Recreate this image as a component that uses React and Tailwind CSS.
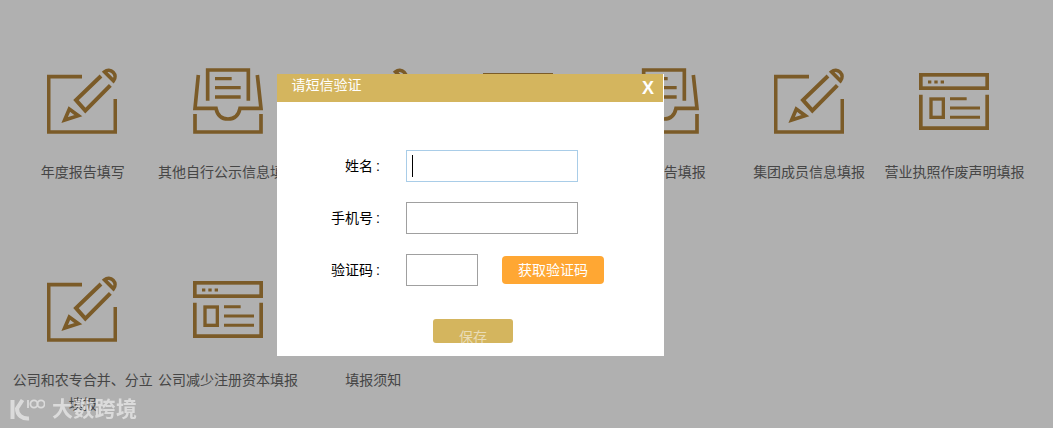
const ICON = "#b2843a";

function Pencil() {
  return (
    <svg width="70" height="66" viewBox="141 54 210 198" fill="none" stroke={ICON} strokeWidth="11">
      <path d="M246 80H146V246H346V147" />
      <path d="M303 78L228 150L256 182L331 106" strokeWidth="12" />
      <path d="M313.6 65.6A19 19 0 0 1 340.4 92.4Z" strokeWidth="11" />
      <path d="M194 210L208 177L235 197Z" strokeWidth="11" />
    </svg>
  );
}

function Inbox() {
  return (
    <svg width="70" height="66" viewBox="579 54 210 198" fill="none" stroke={ICON} strokeWidth="11">
      <path d="M623 152V60H745V152" />
      <path d="M645 86H695M645 113H722M645 141H722" strokeWidth="10" />
      <path d="M595 75L585 175H648C652 195 664 207 684 207C704 207 716 195 720 175H783L772 75" />
      <path d="M585 192V246H783V192" />
    </svg>
  );
}

function Win() {
  return (
    <svg width="70" height="57" viewBox="579 45 210 171" fill="none" stroke={ICON} strokeWidth="11">
      <rect x="584.5" y="50.5" width="199" height="40" />
      <path d="M606 72H616M625 72H635M644 72H654" strokeWidth="9" />
      <path d="M584.5 110V210.5H783.5V110" />
      <rect x="615" y="123" width="37" height="55" strokeWidth="10" />
      <path d="M672 122H722M672 150H762M672 178H762" strokeWidth="9" />
    </svg>
  );
}

const items = [
  { Icon: Pencil, label: "年度报告填写" },
  { Icon: Inbox, label: "其他自行公示信息填报" },
  { Icon: Pencil, label: "" },
  { Icon: Win, label: "" },
  { Icon: Inbox, label: "年度报告填报" },
  { Icon: Pencil, label: "集团成员信息填报" },
  { Icon: Win, label: "营业执照作废声明填报" },
  { Icon: Pencil, label: "公司和农专合并、分立填报" },
  { Icon: Win, label: "公司减少注册资本填报" },
  { Icon: Pencil, label: "填报须知" },
];

function Field({ label, children }) {
  return (
    <div className="flex items-center h-[32px]">
      <div className="w-[103px] text-right text-[14px] text-black">
        {label}
        <span className="ml-[3px]">:</span>
      </div>
      <div className="ml-[26px] flex items-center">{children}</div>
    </div>
  );
}

export default function App() {
  return (
    <div className="relative w-[1053px] h-[428px] overflow-hidden bg-white font-['Liberation_Sans','Noto_Sans_CJK_SC',sans-serif]">
      <div className="grid grid-cols-[repeat(7,145.3px)] auto-rows-[208px] pt-[68px] pl-[10px]">
        {items.map((it, i) => (
          <div key={i} className="flex flex-col items-center">
            <div className="h-[66px] flex items-center justify-center pr-[0.6px]">
              <it.Icon />
            </div>
            <div className="mt-[26px] w-[142px] text-center text-[14px] leading-[24px] text-[#666666]">{it.label}</div>
          </div>
        ))}
      </div>

      <div className="absolute inset-0 bg-black/[0.31]" />

      <div className="absolute left-[10px] top-[396px] flex items-center gap-[7px] opacity-55 blur-[0.4px]">
        <svg width="35" height="24" viewBox="0 0 35 24" fill="none" stroke="#ffffff">
          <path d="M2.5 3V22" strokeWidth="4" />
          <path d="M12.5 3L7 11.5C7 18 12 22 19 21.5" strokeWidth="4" />
          <path d="M18 3V11" strokeWidth="1.8" />
          <circle cx="24" cy="7" r="3.6" strokeWidth="1.8" />
          <circle cx="31" cy="7" r="3.6" strokeWidth="1.8" />
        </svg>
        <span className="text-[21px] leading-[26px] font-bold text-white tracking-[0.3px]">大数跨境</span>
      </div>

      <div className="absolute left-[277px] top-[74px] w-[387px] h-[282px] bg-white">
        <div className="w-[386px] h-[28px] bg-[#d4b55e] flex items-center justify-between pl-[14.5px] pr-[9px]">
          <span className="text-[14px] text-white leading-[22px] mb-[6px]">请短信验证</span>
          <span className="text-[18px] font-bold text-white leading-[24px]">X</span>
        </div>
        <div className="pt-[48px] flex flex-col gap-[20px]">
          <Field label="姓名">
            <div className="relative">
              <input className="block w-[172px] h-[32px] border border-[#a9cde8] outline-none bg-white" />
              <div className="absolute left-[6px] top-[5px] w-px h-[22px] bg-black" />
            </div>
          </Field>
          <Field label="手机号">
            <input className="block w-[172px] h-[32px] border border-[#a0a0a0] outline-none bg-white" />
          </Field>
          <Field label="验证码">
            <input className="block w-[72px] h-[32px] border border-[#a0a0a0] outline-none bg-white" />
            <button className="ml-[24px] w-[102px] h-[28px] rounded-[4px] bg-[#ffa733] text-white text-[14px]">获取验证码</button>
          </Field>
        </div>
        <div className="mt-[33px] flex justify-start pl-[156px]">
          <button className="w-[80px] h-[24px] rounded-[3px] bg-[#d4b55e] text-[#e9dcb6] text-[14px] leading-[20px] pt-[8px] overflow-hidden">保存</button>
        </div>
      </div>
    </div>
  );
}
